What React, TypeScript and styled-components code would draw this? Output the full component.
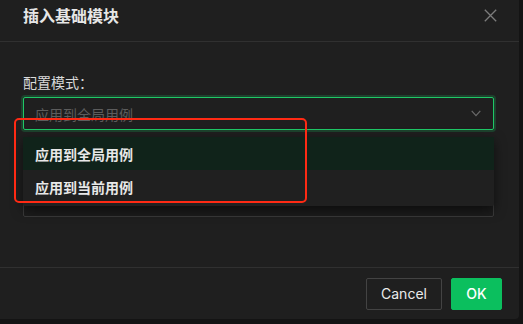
import React from 'react';
import styled, {createGlobalStyle, css} from "styled-components";

const GlobalStyle = createGlobalStyle`
    html, body {
      margin: 0;
      padding: 0;
      height: 100%;
      background-color: #141414;
    }
    body {
      font-family: "Inter", "Noto Sans CJK SC", sans-serif;
      -webkit-font-smoothing: antialiased;
    }
`

const Modal = styled.div`
    position: relative;
    width: 519px;
    height: 319px;
    background-color: #1f1f1f;
    border-bottom-right-radius: 4px;
    display: flex;
    flex-direction: column;
`

const Header = styled.div`
    height: 41px;
    box-sizing: content-box;
    border-bottom: 1px solid #303030;
    display: flex;
    align-items: flex-start;
    justify-content: space-between;
    padding: 0 22px 0 23px;
`

const Title = styled.div`
    margin-top: 4px;
    font-family: "Noto Sans CJK SC", sans-serif;
    font-size: 16px;
    line-height: 22px;
    font-weight: 700;
    color: #e6e6e6;
`

const CloseButton = styled.div`
    margin-top: 9px;
    width: 13px;
    height: 13px;
    color: #7c7c7c;
    display: flex;
`

const Body = styled.div`
    flex: 1;
    padding: 29px 24px 0 23px;
    display: flex;
    flex-direction: column;
`

const Label = styled.div`
    font-family: "Noto Sans CJK SC", sans-serif;
    font-size: 14px;
    line-height: 22px;
    color: #dadada;
    margin-bottom: 4px;
`

const SelectWrap = styled.div`
    position: relative;
    width: 471px;
`

const SelectBox = styled.div`
    height: 33px;
    box-sizing: border-box;
    border: 1px solid #1fc766;
    border-radius: 2px;
    box-shadow: 0 0 0 2px rgba(26, 150, 78, 0.3);
    display: flex;
    align-items: center;
    justify-content: space-between;
    padding: 0 12px 0 11px;
`

const Placeholder = styled.span`
    font-family: "Noto Sans CJK SC", sans-serif;
    font-size: 14px;
    color: #5c5c5c;
`

const Chevron = styled.div`
    width: 10px;
    height: 7px;
    color: #6a6a6a;
    display: flex;
`

const Dropdown = styled.div`
    position: absolute;
    top: 40px;
    left: 0;
    right: 0;
    z-index: 5;
    background-color: #202020;
    box-shadow: 0 4px 12px rgba(0, 0, 0, 0.55);
    border-radius: 2px;
    padding-bottom: 3px;
`

const Option = styled.div<{ active: boolean }>`
    height: 33px;
    display: flex;
    align-items: center;
    padding: 0 12px;
    font-family: "Noto Sans CJK SC", sans-serif;
    font-size: 14px;
    font-weight: 600;
    color: #e8e8e8;
    ${({active}) => active ? css`
      background-color: #10231a;
    ` : null}
`

const Input = styled.div`
    margin-top: 54px;
    width: 471px;
    height: 33px;
    box-sizing: border-box;
    border: 1px solid #3a3a3a;
    border-radius: 2px;
    background-color: #1c1c1c;
`

const Footer = styled.div`
    height: 52px;
    border-top: 1px solid #303030;
    box-sizing: border-box;
    display: flex;
    align-items: center;
    justify-content: flex-end;
    gap: 9px;
    padding: 0 17px 0 0;
`

const Button = styled.button<{ primary?: boolean }>`
    height: 32px;
    border-radius: 2px;
    font-family: "Inter", "Noto Sans CJK SC", sans-serif;
    font-size: 14px;
    padding: 0;
    cursor: pointer;
    ${({primary}) => primary ? css`
      width: 51px;
      background-color: #0bbf5e;
      border: 1px solid #0bbf5e;
      color: #ffffff;
      font-weight: 500;
    ` : css`
      width: 76px;
      background-color: transparent;
      border: 1px solid #434343;
      color: #ebebeb;
    `}
`

const Highlight = styled.div`
    position: absolute;
    left: 14px;
    top: 118px;
    width: 293px;
    height: 85px;
    box-sizing: border-box;
    border: 2px solid #ff2a14;
    border-radius: 5px;
    z-index: 10;
    pointer-events: none;
`

const options = ['应用到全局用例', '应用到当前用例'];

export default function App() {
    return <>
        <GlobalStyle/>
        <Modal>
            <Header>
                <Title>插入基础模块</Title>
                <CloseButton>
                    <svg width="13" height="13" viewBox="0 0 13 13" fill="none">
                        <path d="M0.8 0.8 L12.2 12.2 M12.2 0.8 L0.8 12.2" stroke="currentColor" strokeWidth="1.3"/>
                    </svg>
                </CloseButton>
            </Header>
            <Body>
                <Label>配置模式：</Label>
                <SelectWrap>
                    <SelectBox>
                        <Placeholder>应用到全局用例</Placeholder>
                        <Chevron>
                            <svg width="10" height="7" viewBox="0 0 10 7" fill="none">
                                <path d="M0.7 0.8 L5 5.6 L9.3 0.8" stroke="currentColor" strokeWidth="1.2"/>
                            </svg>
                        </Chevron>
                    </SelectBox>
                    <Dropdown>
                        {options.map((o, i) => <Option key={o} active={i === 0}>{o}</Option>)}
                    </Dropdown>
                </SelectWrap>
                <Input/>
            </Body>
            <Footer>
                <Button>Cancel</Button>
                <Button primary>OK</Button>
            </Footer>
            <Highlight/>
        </Modal>
    </>
}
